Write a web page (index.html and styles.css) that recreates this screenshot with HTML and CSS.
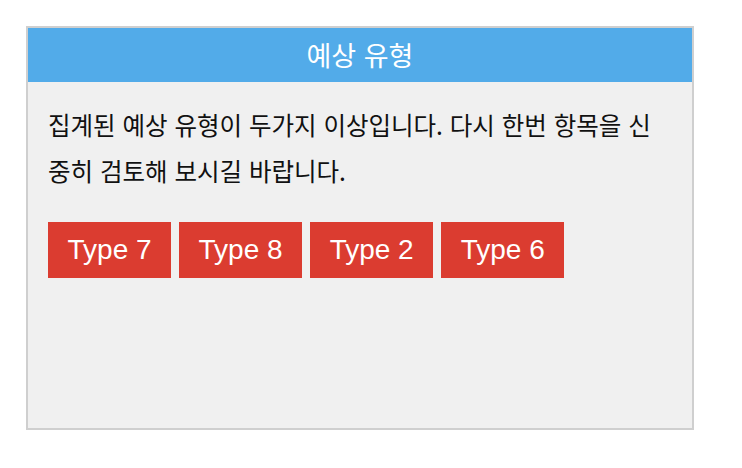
FILE: index.html
```html
<!DOCTYPE html>
<html lang="ko">
<head>
    <meta charset="UTF-8">
    <meta name="viewport" content="width=device-width, initial-scale=1.0">
    <title>예상 유형</title>
    <link rel="stylesheet" href="styles.css">
</head>
<body>
    <div class="panel">
        <div class="panel-header">예상 유형</div>
        <div class="panel-body">
            <p class="message">집계된 예상 유형이 두가지 이상입니다. 다시 한번 항목을 신중히 검토해 보시길 바랍니다.</p>
            <div class="types">
                <span class="type">Type 7</span>
                <span class="type">Type 8</span>
                <span class="type">Type 2</span>
                <span class="type">Type 6</span>
            </div>
        </div>
    </div>
</body>
</html>
```

FILE: styles.css
```css
body {
    font-family: "Liberation Sans", "Noto Sans CJK KR", sans-serif;
    margin: 0;
    padding: 26px;
    background-color: #fff;
}
.panel {
    width: 664px;
    height: 400px;
    border: 2px solid #cfcfcf;
    background: #f0f0f0;
}
.panel-header {
    height: 54px;
    line-height: 54px;
    background: #52abe9;
    color: #fff;
    font-family: "Noto Sans CJK KR", sans-serif;
    font-size: 27px;
    text-align: center;
}
.panel-body {
    padding: 20px 20px;
}
.message {
    margin: 0 0 28px;
    font-family: "Noto Sans CJK KR", sans-serif;
    font-size: 24.5px;
    line-height: 46px;
    color: #111;
}
.types {
    display: flex;
    gap: 8px;
}
.type {
    display: inline-block;
    height: 56px;
    line-height: 56px;
    padding: 0 19.5px;
    background: #db3c30;
    color: #fff;
    font-size: 28px;
}
```
